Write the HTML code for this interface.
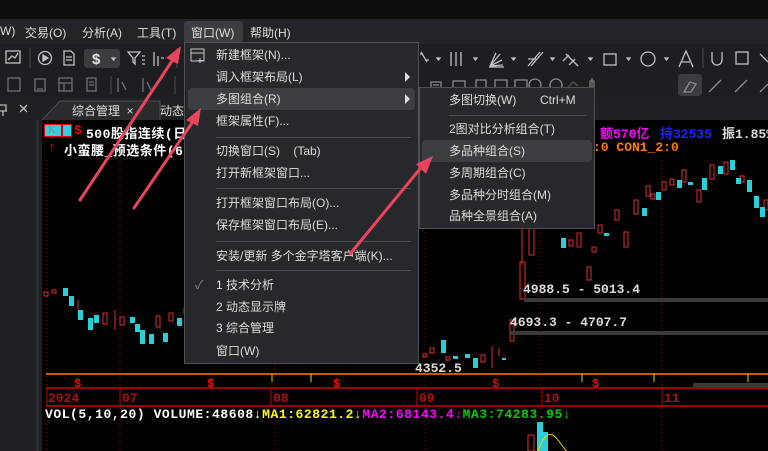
<!DOCTYPE html>
<html><head><meta charset="utf-8"><style>
*{margin:0;padding:0;box-sizing:border-box}
body{width:768px;height:451px;overflow:hidden;background:#000;position:relative;font-family:"Liberation Sans","Noto Sans CJK SC",sans-serif}
.a{position:absolute}
.menu{font-size:12px;color:#dcdcdc;white-space:nowrap}
.mi{position:absolute;left:31px;font-size:12px;color:#dcdcdc;line-height:22px}
.sep{position:absolute;height:1px;background:#4a4c50}
.ct{font-family:"Liberation Mono","Noto Sans CJK SC",monospace;font-weight:bold;font-size:13px;white-space:nowrap;position:absolute}
</style></head><body>
<div class="a" style="left:0;top:0;width:768px;height:19px;background:#0e0e0f"></div>
<div class="a" style="left:0;top:19px;width:768px;height:25px;background:#222427"></div>
<div class="a menu" style="left:0;top:24px">W)</div>
<div class="a menu" style="left:25px;top:24px">交易(O)</div>
<div class="a menu" style="left:82px;top:24px">分析(A)</div>
<div class="a menu" style="left:137px;top:24px">工具(T)</div>
<div class="a" style="left:184px;top:21px;width:59px;height:22px;background:#3b3d41;border-radius:3px"></div>
<div class="a menu" style="left:191px;top:24px">窗口(W)</div>
<div class="a menu" style="left:250px;top:24px">帮助(H)</div>
<div class="a" style="left:0;top:44px;width:768px;height:54px;background:#1c1e21"></div>
<svg class="a" style="left:0;top:44px" width="768" height="54" fill="none" stroke="#bfc1c4" stroke-width="1.3">
<rect x="6" y="7" width="14" height="12"/><polyline points="8,16 12,12 15,14 18,9"/>
<line x1="30" y1="4" x2="30" y2="24" stroke="#444"/>
<circle cx="45" cy="14" r="6.5"/><polygon points="43,11 48,14 43,17" fill="#bfc1c4"/>
<path d="M64,7h7l3,3v11h-10z M66,13h6 M66,16h6"/>
<rect x="84" y="5" width="36" height="19" rx="3" fill="#3a3c40" stroke="none"/>
<text x="92" y="20" fill="#e6e6e6" stroke="none" font-size="15" font-weight="bold" font-family="Liberation Sans">$</text>
<path d="M112,14l3,0l-1.5,2z" fill="#bbb"/>
<path d="M128,8h12l-5,6v6l-2-2v-4z M142,12h3 M142,16h3 M142,20h3"/>
<path d="M154,8v14 M158,12v10 M161,14h3"/>
<line x1="177" y1="4" x2="177" y2="24" stroke="#444"/>
<g transform="translate(0,28)" stroke="#707275">
<rect x="8" y="6" width="12" height="13"/><path d="M35,7h10v12h-10z M37,17h6"/><rect x="59" y="6" width="13" height="13"/><path d="M59,11h13 M64,11v8"/><path d="M87,6h9v13h-9z M89,10h5 M89,13h5"/>
<line x1="111" y1="4" x2="111" y2="22" stroke="#444"/><path d="M118,6v14 M122,10l4,8"/><path d="M143,6v14 M147,10l4,8"/><line x1="175" y1="4" x2="175" y2="22" stroke="#444"/>
</g>
<g stroke="#bfc1c4">
<path d="M421,8l6,10 M420,10h3 M426,16h3"/><path d="M437,14l3,0l-1.5,2z" fill="#bbb"/>
<path d="M451,8v14 M456,8v14 M461,8v14"/><path d="M474,14l3,0l-1.5,2z" fill="#bbb"/>
<path d="M490,22l10-12 M490,22l12-6 M490,22l13-1 M490,22l6-13 M489,23h15"/><path d="M512,14l3,0l-1.5,2z" fill="#bbb"/>
<path d="M528,22l12-14 M531,22l12-14 M528,15l8,0"/><path d="M551,14l3,0l-1.5,2z" fill="#bbb"/>
<path d="M566,10l12,12 M563,17l6-6 M569,21l6-6"/><path d="M589,14l3,0l-1.5,2z" fill="#bbb"/>
<rect x="604" y="10" width="12" height="11"/><path d="M627,14l3,0l-1.5,2z" fill="#bbb"/>
<circle cx="648" cy="15" r="7"/><path d="M665,14l3,0l-1.5,2z" fill="#bbb"/>
<path d="M679,23l7-16l7,16 M682,18h8"/>
<line x1="703" y1="4" x2="703" y2="24" stroke="#444"/>
<path d="M712,8v8a5,5 0 0 0 10,0v-8"/><rect x="736" y="8" width="12" height="12"/><path d="M760,10l8,8"/>
</g>
<g transform="translate(0,28)" stroke="#8a8c8f">
<path d="M431,10h10v9h-10z M433,13h6"/><rect x="453" y="9" width="12" height="10"/><path d="M476,8h10v12h-10z"/><path d="M495,8h12v12h-12z"/><path d="M515,8h12v12h-12z"/><circle cx="535" cy="13" r="6"/><circle cx="556" cy="13" r="6"/>
<path d="M565,19l8-9l5,4" stroke="#555"/><path d="M592,6v16 M590,9h4v8h-4z" stroke="#777"/>
<rect x="678" y="2" width="24" height="22" rx="3" fill="#3a3c40" stroke="none"/><path d="M684,20l6-10l6,2l-5,8z"/>
<path d="M709,20l12-12"/><path d="M735,20l12-12"/><path d="M760,20l8-8"/>
</g>
</svg>
<div class="a" style="left:0;top:98px;width:768px;height:22px;background:#1e2023"></div>
<svg class="a" style="left:0;top:98px" width="40" height="22" stroke="#bbb" fill="none" stroke-width="1.3"><path d="M0,7h6v6h-6 M3,13v5 M-1,13h8"/><path d="M20,7l7,7M27,7l-7,7"/></svg>
<svg class="a" style="left:42px;top:98px" width="160" height="22"><path d="M0,22L18,3H118V22" fill="#2a2c30" stroke="#4a4c50"/></svg>
<div class="a menu" style="left:72px;top:102px">综合管理&nbsp;&nbsp;×</div>
<div class="a menu" style="left:160px;top:102px">动态</div>
<div class="a" style="left:0;top:120px;width:42px;height:331px;background:#1e2023"></div>
<div class="a" style="left:36px;top:120px;width:3px;height:331px;background:#2b2d30"></div>
<svg class="a" style="left:42px;top:120px" width="726" height="331">
<g stroke="#a00" stroke-dasharray="1,3" stroke-width="1">
<line x1="5" y1="40" x2="5" y2="331"/><line x1="78" y1="40" x2="78" y2="331"/><line x1="233" y1="40" x2="233" y2="331"/><line x1="383" y1="40" x2="383" y2="331"/><line x1="498" y1="40" x2="498" y2="331"/><line x1="620" y1="40" x2="620" y2="331"/>
</g>
<g stroke="#e03030" fill="none">
<rect x="2" y="172" width="4" height="4"/><rect x="10" y="170" width="4" height="3"/><rect x="61" y="193" width="4" height="11"/><rect x="78" y="197" width="4" height="8"/><rect x="114" y="196" width="4" height="11"/><rect x="127" y="193" width="4" height="8"/><rect x="142" y="188" width="4" height="6"/>
<line x1="73" y1="190" x2="73" y2="210"/><line x1="36" y1="180" x2="36" y2="190"/>
</g>
<g fill="#27d0d8">
<rect x="21" y="168" width="5" height="8"/><rect x="27" y="176" width="5" height="10"/><rect x="36" y="190" width="5" height="10"/><rect x="46" y="198" width="5" height="12"/><rect x="52" y="195" width="5" height="8"/><rect x="88" y="197" width="5" height="6"/><rect x="93" y="204" width="5" height="8"/><rect x="98" y="210" width="5" height="14"/><rect x="107" y="214" width="5" height="10"/><rect x="121" y="213" width="5" height="9"/><rect x="135" y="198" width="5" height="8"/><rect x="150" y="195" width="4" height="6"/>
</g>
<g stroke="#e03030" fill="none">
<rect x="381" y="234" width="4" height="3"/><rect x="388" y="228" width="4" height="5"/><rect x="404" y="237" width="4" height="3"/><rect x="439" y="235" width="4" height="7"/><rect x="468" y="200" width="4" height="21" /><rect x="478" y="142" width="5" height="37"/><rect x="487" y="105" width="5" height="30"/><rect x="486" y="70" width="5" height="22"/>
<line x1="450" y1="226" x2="450" y2="248"/><line x1="457" y1="228" x2="457" y2="236"/><line x1="480" y1="108" x2="480" y2="145"/>
</g>
<g fill="#27d0d8">
<rect x="399" y="220" width="5" height="13"/><rect x="411" y="236" width="5" height="3"/><rect x="423" y="234" width="5" height="4"/><rect x="431" y="238" width="5" height="10"/><rect x="460" y="238" width="4" height="2"/>
</g>
<g stroke="#e03030" fill="none">
<rect x="527" y="120" width="4" height="6"/><rect x="535" y="113" width="4" height="14"/><rect x="545" y="147" width="4" height="13"/><rect x="550" y="127" width="4" height="5"/><rect x="556" y="105" width="4" height="8"/><rect x="573" y="90" width="4" height="10"/><rect x="582" y="112" width="4" height="15"/><rect x="592" y="80" width="4" height="14"/><rect x="604" y="66" width="4" height="10"/><rect x="609" y="74" width="4" height="5"/><rect x="620" y="62" width="4" height="8"/><rect x="628" y="59" width="4" height="6"/><rect x="640" y="50" width="4" height="12"/><rect x="655" y="70" width="4" height="12"/><rect x="668" y="45" width="4" height="14"/><rect x="682" y="42" width="4" height="12"/><rect x="698" y="56" width="4" height="6"/><rect x="722" y="80" width="4" height="10"/><rect x="728" y="74" width="4" height="5"/>
</g>
<g fill="#27d0d8">
<rect x="519" y="118" width="5" height="10"/><rect x="562" y="113" width="5" height="3"/><rect x="600" y="88" width="5" height="8"/><rect x="614" y="72" width="5" height="8"/><rect x="635" y="60" width="5" height="8"/><rect x="646" y="62" width="5" height="3"/><rect x="660" y="58" width="5" height="12"/><rect x="676" y="46" width="5" height="8"/><rect x="688" y="40" width="5" height="10"/><rect x="694" y="58" width="5" height="6"/><rect x="705" y="60" width="5" height="12"/><rect x="712" y="76" width="5" height="12"/><rect x="718" y="87" width="5" height="10"/><rect x="740" y="92" width="5" height="22"/>
</g>
<rect x="482" y="178" width="244" height="4" fill="#3a3a3a"/>
<rect x="468" y="211" width="258" height="4" fill="#3a3a3a"/>
<rect x="651" y="263" width="75" height="4" fill="#3a3a3a"/>
<line x1="4" y1="254" x2="726" y2="254" stroke="#ff7a00" stroke-width="1.5"/>
<g stroke="#e8d800"><line x1="230" y1="254" x2="230" y2="262"/><line x1="269" y1="254" x2="269" y2="262"/><line x1="540" y1="254" x2="540" y2="262"/><line x1="612" y1="254" x2="612" y2="262"/><line x1="706" y1="254" x2="706" y2="262"/></g>
<g fill="#f00" font-size="12" font-weight="bold" font-family="Liberation Mono"><text x="32" y="267">$</text><text x="165" y="267">$</text><text x="291" y="267">$</text><text x="450" y="267">$</text><text x="550" y="267">$</text></g>
<line x1="4" y1="268" x2="726" y2="268" stroke="#c00" stroke-width="1.5"/>
<line x1="4" y1="286" x2="726" y2="286" stroke="#c00" stroke-width="1.5"/>
<g stroke="#c00"><line x1="5" y1="268" x2="5" y2="286"/><line x1="78" y1="268" x2="78" y2="286"/><line x1="229" y1="268" x2="229" y2="286"/><line x1="375" y1="268" x2="375" y2="286"/><line x1="500" y1="268" x2="500" y2="286"/><line x1="620" y1="268" x2="620" y2="286"/></g>
<g fill="#b01010" font-size="13" font-weight="bold" font-family="Liberation Mono"><text x="6" y="282">2024</text><text x="80" y="282">07</text><text x="231" y="282">08</text><text x="377" y="282">09</text><text x="502" y="282">10</text><text x="622" y="282">11</text></g>
<rect x="486" y="315" width="6" height="16" fill="none" stroke="#e03030"/>
<rect x="495" y="302" width="6" height="29" fill="#27d0d8"/><rect x="501" y="312" width="5" height="19" fill="#27d0d8"/>
<path d="M496,331 Q505,305 516,320 T525,331" fill="none" stroke="#e8d800"/>
</svg>
<div class="a" style="left:44px;top:124px;width:18px;height:13px;background:#30d0e0;border:1px solid #e00"></div>
<div class="a" style="left:48px;top:124px;font-size:11px;color:#888;font-family:'Liberation Serif'">K</div>
<div class="a" style="left:62px;top:124px;width:10px;height:13px;background:#30d0e0;border:1px solid #e00"></div>
<div class="ct" style="left:74px;top:123px;color:#f00">$</div>
<div class="ct" style="left:86px;top:123px;color:#fff;letter-spacing:0.5px">500股指连续(日</div>
<div class="ct" style="left:48px;top:140px;color:#f00">↑</div>
<div class="ct" style="left:64px;top:140px;color:#fff;letter-spacing:0.5px">小蛮腰_预选条件(6</div>
<div class="ct" style="left:600px;top:123px;color:#f0f">额570亿</div>
<div class="ct" style="left:660px;top:123px;color:#22f">持32535</div>
<div class="ct" style="left:722px;top:123px;color:#ddd">振1.85%</div>
<div class="ct" style="left:593px;top:140px;color:#ff7a00">:0 CON1_2:0</div>
<div class="ct" style="left:523px;top:282px;color:#ddd">4988.5 - 5013.4</div>
<div class="ct" style="left:510px;top:315px;color:#ddd">4693.3 - 4707.7</div>
<div class="ct" style="left:415px;top:361px;color:#ddd">4352.5</div>
<div class="ct" style="left:45px;top:407px;color:#fff;letter-spacing:0.55px">VOL(5,10,20) VOLUME:48608↓<span style="color:#ff0">MA1:62821.2↓</span><span style="color:#f0f">MA2:68143.4↓</span><span style="color:#0c0">MA3:74283.95↓</span></div>
<div class="a" style="left:184px;top:42px;width:235px;height:322px;background:#26282c;border:1px solid #4e5054">
<svg class="a" style="left:5px;top:5px" width="16" height="16" fill="none" stroke="#c8c8c8"><rect x="1" y="1" width="13" height="12"/><line x1="1" y1="5" x2="14" y2="5"/><path d="M10,10v5M8,12.5h5"/></svg>
<div class="mi" style="top:1px">新建框架(N)...</div>
<div class="mi" style="top:23px">调入框架布局(L)</div>
<div class="a" style="left:220px;top:29px;width:0;height:0;border-left:5px solid #ddd;border-top:5px solid transparent;border-bottom:5px solid transparent"></div>
<div class="a" style="left:3px;top:45px;width:227px;height:22px;background:#3c3e42;border-radius:4px"></div>
<div class="mi" style="top:45px">多图组合(R)</div>
<div class="a" style="left:220px;top:51px;width:0;height:0;border-left:5px solid #ddd;border-top:5px solid transparent;border-bottom:5px solid transparent"></div>
<div class="mi" style="top:67px">框架属性(F)...</div>
<div class="sep" style="left:31px;top:94px;width:195px"></div>
<div class="mi" style="top:97px">切换窗口(S)&nbsp;&nbsp;&nbsp;&nbsp;(Tab)</div>
<div class="mi" style="top:119px">打开新框架窗口...</div>
<div class="sep" style="left:31px;top:145px;width:195px"></div>
<div class="mi" style="top:149px">打开框架窗口布局(O)...</div>
<div class="mi" style="top:171px">保存框架窗口布局(E)...</div>
<div class="sep" style="left:31px;top:198px;width:195px"></div>
<div class="mi" style="top:202px">安装/更新 多个金字塔客户端(K)...</div>
<div class="sep" style="left:31px;top:227px;width:195px"></div>
<div class="mi" style="left:10px;top:231px;color:#888">✓</div>
<div class="mi" style="top:231px">1 技术分析</div>
<div class="mi" style="top:253px">2 动态显示牌</div>
<div class="mi" style="top:274px">3 综合管理</div>
<div class="mi" style="top:297px">窗口(W)</div>
</div>
<div class="a" style="left:419px;top:87px;width:176px;height:142px;background:#26282c;border:1px solid #4e5054">
<div class="mi" style="left:29px;top:1px">多图切换(W)</div>
<div class="mi" style="left:120px;top:1px">Ctrl+M</div>
<div class="sep" style="left:29px;top:27px;width:138px"></div>
<div class="mi" style="left:29px;top:30px">2图对比分析组合(T)</div>
<div class="a" style="left:2px;top:52px;width:170px;height:22px;background:#3c3e42;border-radius:4px"></div>
<div class="mi" style="left:29px;top:52px">多品种组合(S)</div>
<div class="mi" style="left:29px;top:74px">多周期组合(C)</div>
<div class="mi" style="left:29px;top:96px">多品种分时组合(M)</div>
<div class="mi" style="left:29px;top:117px">品种全景组合(A)</div>
</div>
<svg class="a" style="left:0;top:0" width="768" height="451" fill="none" stroke="#e8455c" stroke-width="3" stroke-linecap="round">
<line x1="80" y1="200" x2="174" y2="58"/><polygon points="181,46 166,58 178,64" fill="#e8455c" stroke="none"/>
<line x1="134" y1="208" x2="194" y2="120"/><polygon points="201,108 186,120 198,126" fill="#e8455c" stroke="none"/>
<line x1="350" y1="254" x2="424" y2="164"/><polygon points="433,156 416,164 426,174" fill="#e8455c" stroke="none"/>
</svg>
</body></html>
